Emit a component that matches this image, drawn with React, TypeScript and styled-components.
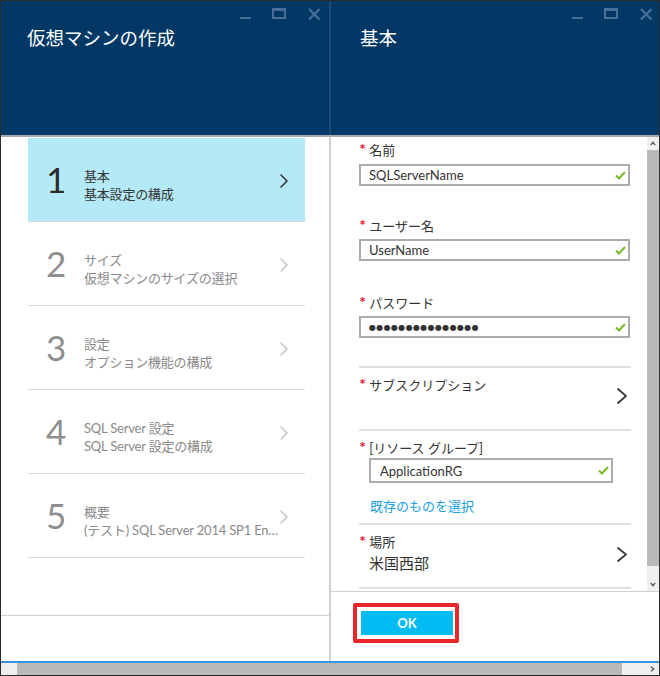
import React from 'react';
import styled, { createGlobalStyle } from 'styled-components';

const GlobalStyle = createGlobalStyle`
  *, *::before, *::after { box-sizing: border-box; }
  html, body { margin: 0; padding: 0; background: #ffffff; }
  body { font-family: Lato, "Noto Sans CJK JP", sans-serif; color: #333333; }
`;

const Frame = styled.div`
  width: 660px;
  height: 676px;
  border: 1px solid #2b2b2b;
  display: flex;
  flex-direction: column;
  overflow: hidden;
  background: #ffffff;
`;

const Blades = styled.div`
  flex: 1;
  display: flex;
  min-height: 0;
`;

const Blade = styled.section`
  width: 328px;
  flex: none;
  display: flex;
  flex-direction: column;
`;

const Divider = styled.div`
  width: 2px;
  flex: none;
  background: linear-gradient(
    to bottom,
    #1f4a76 0,
    #1f4a76 134px,
    #a2abb4 134px,
    #a2abb4 136px,
    #d0d0d0 136px
  );
`;

const Header = styled.header<{ $padLeft: number; $padRight: number }>`
  height: 136px;
  flex: none;
  background: #013866;
  border-bottom: 2px solid #a2abb4;
  padding: 7px ${p => p.$padRight}px 0 ${p => p.$padLeft}px;
  display: flex;
  flex-direction: column;
`;

const Controls = styled.div`
  display: flex;
  justify-content: flex-end;
  height: 13px;
`;

const Title = styled.h1`
  margin: 4px 0 0;
  font-family: "Noto Sans CJK JP", sans-serif;
  font-weight: 400;
  font-size: 18.5px;
  line-height: 24px;
  color: #ffffff;
`;

/* ---------- left blade ---------- */

const StepsArea = styled.div`
  flex: 1;
  padding: 1px 24px 0 27px;
  border-bottom: 1px solid #cfcfcf;
`;

const Step = styled.div<{ $active?: boolean }>`
  height: 84px;
  border-bottom: 1px solid #dadada;
  background: ${p => (p.$active ? '#b4eaf7' : 'transparent')};
  display: flex;
  align-items: flex-start;
  padding: 0 17px 0 18px;
  color: ${p => (p.$active ? '#333333' : '#8a8a8a')};
`;

const StepNumber = styled.div<{ $active?: boolean }>`
  width: 38px;
  flex: none;
  margin-top: 24px;
  font-family: Lato, sans-serif;
  font-size: 35px;
  line-height: 35px;
  color: ${p => (p.$active ? '#2b2b2b' : '#8f8f8f')};
`;

const StepText = styled.div`
  flex: 1;
  min-width: 0;
  margin-top: 29px;
  font-size: 13px;
  line-height: 18px;
  letter-spacing: -0.2px;
`;

const StepLine = styled.div`
  white-space: nowrap;
  overflow: hidden;
  text-overflow: ellipsis;
`;

const StepChevron = styled.div`
  flex: none;
  margin: 36px 0 0 2px;
  display: flex;
`;

const LeftFooter = styled.div`
  height: 45px;
  flex: none;
`;

/* ---------- right blade ---------- */

const ContentRow = styled.div`
  flex: 1;
  display: flex;
  min-height: 0;
`;

const Form = styled.div`
  flex: 1;
  min-width: 0;
  overflow: hidden;
  padding: 4px 17px 0 28px;
`;

const Label = styled.div<{ $mt?: number }>`
  display: flex;
  align-items: flex-start;
  margin-top: ${p => p.$mt ?? 0}px;
  font-size: 13px;
  line-height: 18px;
  color: #333333;
`;

const Required = styled.span`
  font-family: "DejaVu Sans", sans-serif;
  font-weight: 700;
  font-size: 10px;
  line-height: 12px;
  margin: 2px 4px 0 1px;
  color: #e81123;
`;

const TextBox = styled.div<{ $indent?: boolean; $mt: number }>`
  height: ${p => (p.$indent ? 25 : 22)}px;
  margin: ${p => p.$mt}px ${p => (p.$indent ? 17 : 0)}px 0 ${p => (p.$indent ? 10 : 0)}px;
  border: 2px solid #ababab;
  display: flex;
  align-items: center;
  justify-content: space-between;
  padding: 0 2px 0 ${p => (p.$indent ? 9 : 8)}px;
  font-size: 13px;
  color: #333333;
`;

const Dots = styled.span`
  font-family: "DejaVu Sans", sans-serif;
  font-size: 8px;
  letter-spacing: 0.35px;
  color: #333333;
`;

const Rule = styled.div<{ $mt?: number }>`
  height: 2px;
  margin-top: ${p => p.$mt ?? 0}px;
  margin-right: -1px;
  background: #e0e0e0;
`;

const Section = styled.div<{ $h: number }>`
  height: ${p => p.$h}px;
  padding-top: 8px;
  display: flex;
  justify-content: space-between;
  align-items: flex-start;
`;

const SectionBody = styled.div`
  flex: 1;
  min-width: 0;
`;

const SectionChevron = styled.div<{ $mt: number }>`
  flex: none;
  margin: ${p => p.$mt}px 3px 0 0;
  display: flex;
`;

const Link = styled.div`
  margin: 14px 0 0 11px;
  font-size: 13px;
  line-height: 18px;
  color: #1ba1e2;
`;

const Value = styled.div`
  margin: 2px 0 0 10px;
  font-size: 15px;
  line-height: 20px;
  color: #333333;
`;

const VScroll = styled.div`
  width: 12px;
  flex: none;
  display: flex;
  flex-direction: column;
  background: #f0f0f0;
`;

const ScrollButton = styled.div`
  height: 13px;
  flex: none;
  display: flex;
  align-items: center;
  justify-content: center;
`;

const VThumb = styled.div`
  height: 416px;
  flex: none;
  background: #b9b9b9;
`;

const VTrack = styled.div`
  flex: 1;
`;

const RightFooter = styled.footer`
  height: 70px;
  flex: none;
  border-top: 1px solid #cfcfcf;
  padding: 11px 0 0 22px;
`;

const Callout = styled.div`
  display: inline-flex;
  border: 4px solid #e8262b;
  border-radius: 2px;
  padding: 4px 2px 4px 4px;
`;

const OkButton = styled.button`
  width: 92px;
  height: 24px;
  border: none;
  margin: 0;
  padding: 0;
  background: #00bcf2;
  color: #ffffff;
  font-family: Lato, sans-serif;
  font-size: 13px;
  font-weight: 700;
  cursor: pointer;
`;

/* ---------- bottom scrollbar ---------- */

const BottomRule = styled.div`
  height: 2px;
  flex: none;
  background: #3a95dc;
`;

const HScroll = styled.div`
  height: 12px;
  flex: none;
  display: flex;
  background: #efefef;
`;

const HStart = styled.div`
  width: 16px;
  flex: none;
`;

const HThumb = styled.div`
  width: 605px;
  flex: none;
  background: #b9b9b9;
`;

const HEnd = styled.div`
  flex: 1;
  display: flex;
  align-items: center;
  justify-content: flex-end;
  padding-right: 3px;
`;

/* ---------- drawings ---------- */

const WindowControls = () => (
  <svg width="81" height="13" viewBox="0 0 81 13" aria-hidden="true">
    <rect x="0" y="9" width="11" height="2" fill="#4a6f97" />
    <path d="M32 0h14v11H32z M34 3v6h10V3z" fill="#4a6f97" fillRule="evenodd" />
    <path d="M69 1l10.5 10.5M79.5 1L69 11.5" stroke="#4a6f97" strokeWidth="2.3" fill="none" />
  </svg>
);

const Chevron = ({ color, w, h, sw }: { color: string; w: number; h: number; sw: number }) => (
  <svg width={w} height={h} viewBox={`0 0 ${w} ${h}`} aria-hidden="true">
    <path
      d={`M1 1 L${w - 1} ${h / 2} L1 ${h - 1}`}
      stroke={color}
      strokeWidth={sw}
      fill="none"
      strokeLinecap="round"
      strokeLinejoin="round"
    />
  </svg>
);

const Check = () => (
  <svg width="11" height="9" viewBox="0 0 11 9" aria-hidden="true">
    <path d="M1 4.5 L4 7.5 L10 1" stroke="#7ab929" strokeWidth="2" fill="none" />
  </svg>
);

const Caret = ({ dir }: { dir: 'up' | 'down' | 'right' }) => {
  const d =
    dir === 'up'
      ? 'M0.8 4 L3 1.3 L5.2 4'
      : dir === 'down'
      ? 'M0.8 1 L3 3.7 L5.2 1'
      : 'M1 0.8 L3.7 3 L1 5.2';
  return (
    <svg width="6" height="6" viewBox="0 0 6 6" aria-hidden="true">
      <path d={d} stroke="#5a5a5a" strokeWidth="1.4" fill="none" />
    </svg>
  );
};

/* ---------- data ---------- */

const steps = [
  { n: '1', title: '基本', sub: '基本設定の構成', active: true },
  { n: '2', title: 'サイズ', sub: '仮想マシンのサイズの選択' },
  { n: '3', title: '設定', sub: 'オプション機能の構成' },
  { n: '4', title: 'SQL Server 設定', sub: 'SQL Server 設定の構成' },
  {
    n: '5',
    title: '概要',
    sub: '(テスト) SQL Server 2014 SP1 Enterprise on Windows Server 2012 R2',
  },
];

export default function App() {
  return (
    <>
      <GlobalStyle />
      <Frame>
        <Blades>
          <Blade>
            <Header $padLeft={26} $padRight={8}>
              <Controls>
                <WindowControls />
              </Controls>
              <Title>仮想マシンの作成</Title>
            </Header>
            <StepsArea>
              {steps.map(s => (
                <Step key={s.n} $active={s.active}>
                  <StepNumber $active={s.active}>{s.n}</StepNumber>
                  <StepText>
                    <StepLine>{s.title}</StepLine>
                    <StepLine>{s.sub}</StepLine>
                  </StepText>
                  <StepChevron>
                    <Chevron color={s.active ? '#333333' : '#c4c4c4'} w={8} h={14} sw={1.5} />
                  </StepChevron>
                </Step>
              ))}
            </StepsArea>
            <LeftFooter />
          </Blade>

          <Divider />

          <Blade>
            <Header $padLeft={29} $padRight={6}>
              <Controls>
                <WindowControls />
              </Controls>
              <Title>基本</Title>
            </Header>
            <ContentRow>
              <Form>
                <Label>
                  <Required>*</Required>名前
                </Label>
                <TextBox $mt={5}>
                  <span>SQLServerName</span>
                  <Check />
                </TextBox>

                <Label $mt={31}>
                  <Required>*</Required>ユーザー名
                </Label>
                <TextBox $mt={4}>
                  <span>UserName</span>
                  <Check />
                </TextBox>

                <Label $mt={33}>
                  <Required>*</Required>パスワード
                </Label>
                <TextBox $mt={4}>
                  <Dots>●●●●●●●●●●●●●●●</Dots>
                  <Check />
                </TextBox>

                <Rule $mt={28} />
                <Section $h={61}>
                  <SectionBody>
                    <Label>
                      <Required>*</Required>サブスクリプション
                    </Label>
                  </SectionBody>
                  <SectionChevron $mt={12}>
                    <Chevron color="#3a3a3a" w={10} h={16} sw={1.8} />
                  </SectionChevron>
                </Section>
                <Rule />
                <Section $h={92}>
                  <SectionBody>
                    <Label>
                      <Required>*</Required>[リソース グループ]
                    </Label>
                    <TextBox $indent $mt={1}>
                      <span>ApplicationRG</span>
                      <Check />
                    </TextBox>
                    <Link>既存のものを選択</Link>
                  </SectionBody>
                </Section>
                <Rule />
                <Section $h={62}>
                  <SectionBody>
                    <Label>
                      <Required>*</Required>場所
                    </Label>
                    <Value>米国西部</Value>
                  </SectionBody>
                  <SectionChevron $mt={14}>
                    <Chevron color="#3a3a3a" w={10} h={15} sw={1.8} />
                  </SectionChevron>
                </Section>
                <Rule />
              </Form>
              <VScroll>
                <ScrollButton>
                  <Caret dir="up" />
                </ScrollButton>
                <VThumb />
                <VTrack />
                <ScrollButton>
                  <Caret dir="down" />
                </ScrollButton>
              </VScroll>
            </ContentRow>
            <RightFooter>
              <Callout>
                <OkButton>OK</OkButton>
              </Callout>
            </RightFooter>
          </Blade>
        </Blades>
        <BottomRule />
        <HScroll>
          <HStart />
          <HThumb />
          <HEnd>
            <Caret dir="right" />
          </HEnd>
        </HScroll>
      </Frame>
    </>
  );
}
